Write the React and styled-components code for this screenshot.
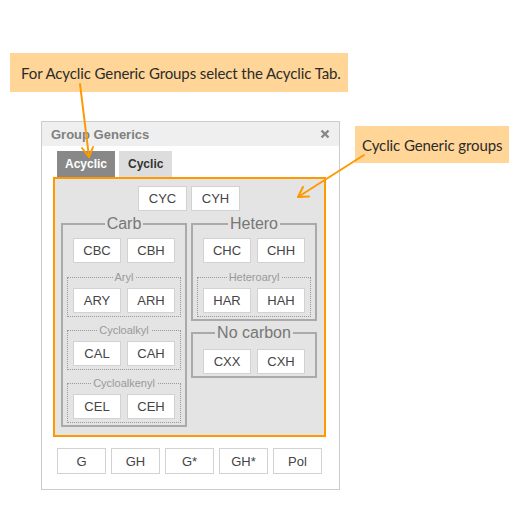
import React from "react";
import styled, { createGlobalStyle } from "styled-components";

const GlobalStyle = createGlobalStyle`
  body {
    margin: 0;
    background: #ffffff;
    font-family: "Liberation Sans", Arial, sans-serif;
  }
`;

const Canvas = styled.div`
  position: relative;
  width: 530px;
  height: 508px;
  padding: 121px 0 0 41px;
  box-sizing: border-box;
  font-family: "Liberation Sans", Arial, sans-serif;
`;

const Callout = styled.div`
  position: absolute;
  left: ${(p) => p.x}px;
  top: ${(p) => p.y}px;
  width: ${(p) => p.w}px;
  height: ${(p) => p.h}px;
  box-sizing: border-box;
  padding-left: ${(p) => p.pad}px;
  display: flex;
  align-items: center;
  background: #ffd697;
  color: #2b2b2b;
  font-family: Lato, "Open Sans", sans-serif;
  font-size: 15px;
  letter-spacing: -0.1px;
  white-space: nowrap;
`;

const Arrows = styled.svg`
  position: absolute;
  left: 0;
  top: 0;
  pointer-events: none;
`;

const Dialog = styled.div`
  width: 299px;
  height: 369px;
  box-sizing: border-box;
  border: 1px solid #cccccc;
  background: #ffffff;
`;

const Header = styled.div`
  height: 24px;
  padding: 0 9px;
  display: flex;
  align-items: center;
  justify-content: space-between;
  background: #efefef;
  color: #808080;
  font-family: "Liberation Sans", Arial, sans-serif;
  font-size: 13px;
  font-weight: bold;
`;

const Body = styled.div`
  padding: 5px 11px 0 11px;
`;

const Tabs = styled.div`
  display: flex;
  gap: 4px;
  margin-left: 4px;
`;

const Tab = styled.div`
  height: 26px;
  padding: 0 ${(p) => (p.active ? 8 : 9)}px;
  display: flex;
  align-items: center;
  font-family: "Liberation Sans", Arial, sans-serif;
  font-size: 12px;
  font-weight: bold;
  background: ${(p) => (p.active ? "#888888" : "#dddddd")};
  color: ${(p) => (p.active ? "#ffffff" : "#333333")};
`;

const Panel = styled.div`
  width: 273px;
  box-sizing: border-box;
  border: 2px solid #ff9900;
  background: #e4e4e4;
  padding: 7px 7px 8px 6px;
  display: flex;
  flex-direction: column;
  gap: 4px;
`;

const KeyRow = styled.div`
  display: flex;
  justify-content: center;
  gap: ${(p) => p.gap || 6}px;
`;

const Key = styled.div`
  width: ${(p) => p.w || 48}px;
  height: ${(p) => p.h || 25}px;
  box-sizing: border-box;
  border: 1px solid #d2d2d2;
  background: #ffffff;
  display: flex;
  align-items: center;
  justify-content: center;
  font-family: "Liberation Sans", Arial, sans-serif;
  font-size: 13px;
  color: #444444;
`;

const Columns = styled.div`
  display: flex;
  gap: 4px;
  align-items: flex-start;
`;

const Stack = styled.div`
  display: flex;
  flex-direction: column;
  gap: 3px;
`;

const Group = styled.fieldset`
  width: 126px;
  margin: 0;
  min-width: 0;
  box-sizing: border-box;
  border: 2px solid #aaaaaa;
  padding: ${(p) => p.top || 5}px 4px 2px;
`;

const GroupTitle = styled.legend`
  margin: 0 auto;
  padding: 0 2px;
  font-family: "Liberation Sans", Arial, sans-serif;
  font-size: 16px;
  line-height: 18px;
  color: #777777;
`;

const SubGroup = styled.fieldset`
  margin: ${(p) => (p.first ? 8 : 7)}px 0 0;
  min-width: 0;
  border: 1px dotted #999999;
  padding: 5px 0 3px;
`;

const SubTitle = styled.legend`
  margin: 0 auto;
  padding: 0 2px;
  font-family: "Liberation Sans", Arial, sans-serif;
  font-size: 11px;
  line-height: 12px;
  color: #999999;
`;

const Footer = styled.div`
  display: flex;
  gap: 5px;
  margin: 11px 0 0 4px;
`;

function CloseIcon() {
  return (
    <svg width="10" height="10" viewBox="0 0 10 10">
      <path d="M1.5 1.5 L8.5 8.5 M8.5 1.5 L1.5 8.5" stroke="#888888" strokeWidth="2.4" />
    </svg>
  );
}

function Pair({ a, b }) {
  return (
    <KeyRow>
      <Key>{a}</Key>
      <Key>{b}</Key>
    </KeyRow>
  );
}

function Sub({ title, a, b, first }) {
  return (
    <SubGroup first={first}>
      <SubTitle>{title}</SubTitle>
      <Pair a={a} b={b} />
    </SubGroup>
  );
}

export default function App() {
  return (
    <>
      <GlobalStyle />
      <Canvas>
        <Dialog>
          <Header>
            <span>Group Generics</span>
            <CloseIcon />
          </Header>
          <Body>
            <Tabs>
              <Tab active>Acyclic</Tab>
              <Tab>Cyclic</Tab>
            </Tabs>
            <Panel>
              <KeyRow gap={4}>
                <Key w={49}>CYC</Key>
                <Key w={49}>CYH</Key>
              </KeyRow>
              <Columns>
                <Group>
                  <GroupTitle>Carb</GroupTitle>
                  <Pair a="CBC" b="CBH" />
                  <Sub first title="Aryl" a="ARY" b="ARH" />
                  <Sub title="Cycloalkyl" a="CAL" b="CAH" />
                  <Sub title="Cycloalkenyl" a="CEL" b="CEH" />
                </Group>
                <Stack>
                  <Group>
                    <GroupTitle>Hetero</GroupTitle>
                    <Pair a="CHC" b="CHH" />
                    <Sub first title="Heteroaryl" a="HAR" b="HAH" />
                  </Group>
                  <Group top={7}>
                    <GroupTitle>No carbon</GroupTitle>
                    <Pair a="CXX" b="CXH" />
                  </Group>
                </Stack>
              </Columns>
            </Panel>
            <Footer>
              {["G", "GH", "G*", "GH*", "Pol"].map((k) => (
                <Key key={k} w={49} h={26}>
                  {k}
                </Key>
              ))}
            </Footer>
          </Body>
        </Dialog>

        <Callout x={10} y={53} w={338} h={39} pad={11}>
          For Acyclic Generic Groups select the Acyclic Tab.
        </Callout>
        <Callout x={355} y={126} w={154} h={37} pad={7}>
          Cyclic Generic groups
        </Callout>

        <Arrows width="530" height="508" viewBox="0 0 530 508">
          <g stroke="#ff9900" strokeWidth="2" fill="none" strokeLinecap="round" strokeLinejoin="round">
            <path d="M80 84 L89 157" />
            <path d="M93 147 L89 157 L82 148" />
            <path d="M364 155 L298 197" />
            <path d="M309 196.5 L298 197 L303 187" />
          </g>
        </Arrows>
      </Canvas>
    </>
  );
}
